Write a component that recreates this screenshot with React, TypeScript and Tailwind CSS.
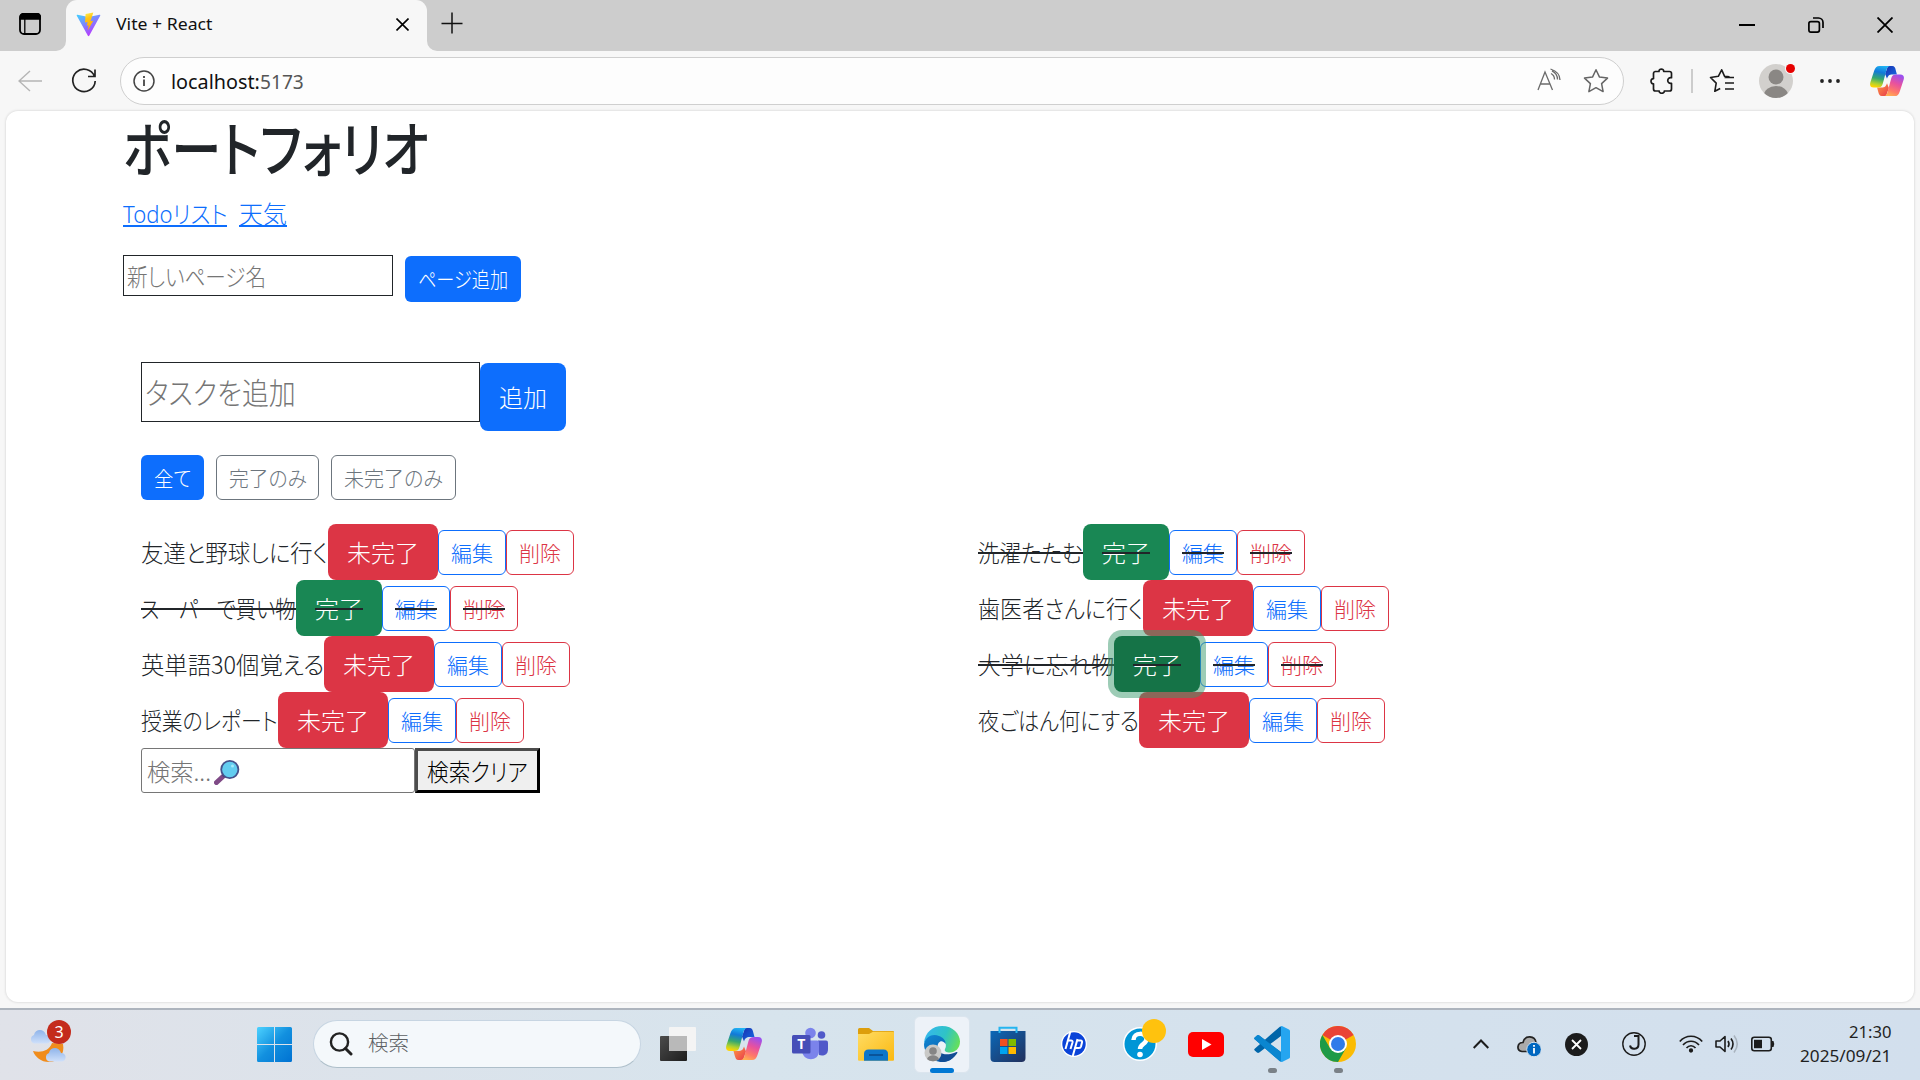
import React, { useLayoutEffect, useRef, useState } from 'react';

const FONT = 'font-["Noto_Sans","Noto_Sans_CJK_JP",sans-serif]';
const JP = 'font-light font-["Noto_Sans_CJK_JP",sans-serif] [font-feature-settings:"palt"]';

/** Single line of text condensed or widened to an exact advance width. */
function Fit({ w, className = '', children }: { w: number; className?: string; children: React.ReactNode }) {
  const ref = useRef<HTMLSpanElement>(null);
  const [k, setK] = useState(1);
  useLayoutEffect(() => {
    const measure = () => {
      if (ref.current && ref.current.offsetWidth) setK(w / ref.current.offsetWidth);
    };
    measure();
    document.fonts?.ready.then(measure);
  }, [w]);
  return (
    <span className="block shrink-0" style={{ width: w }}>
      <span ref={ref} className={`block w-max origin-left whitespace-nowrap ${className}`} style={{ transform: `scaleX(${k})` }}>
        {children}
      </span>
    </span>
  );
}

function Strike() {
  return <span className="absolute inset-x-0 top-1/2 h-[2px] bg-[#212529]" />;
}

function CopilotIcon({ size, id }: { size: number; id: string }) {
  return (
    <svg width={size} height={size} viewBox="0 0 36 36">
      <defs>
        <linearGradient id={`${id}a`} x1="0.6" y1="0" x2="0.4" y2="1">
          <stop offset="0" stopColor="#20b4f4" /><stop offset=".3" stopColor="#1279d8" />
          <stop offset=".6" stopColor="#35a86f" /><stop offset=".85" stopColor="#b4d22c" /><stop offset="1" stopColor="#ffd400" />
        </linearGradient>
        <linearGradient id={`${id}b`} x1="0.7" y1="0" x2="0.3" y2="1">
          <stop offset="0" stopColor="#9a50f0" /><stop offset=".4" stopColor="#e8519e" />
          <stop offset=".75" stopColor="#ff7a68" /><stop offset="1" stopColor="#ffb152" />
        </linearGradient>
        <linearGradient id={`${id}c`} x1="0" y1="0" x2="1" y2="1">
          <stop offset="0" stopColor="#1a2fae" /><stop offset="1" stopColor="#1470e8" />
        </linearGradient>
        <linearGradient id={`${id}d`} x1="0" y1="0" x2="1" y2="1">
          <stop offset="0" stopColor="#ff9a45" /><stop offset="1" stopColor="#e8394c" />
        </linearGradient>
      </defs>
      <path d="M19 2h4.500C26 2 26.800 4 27.300 6.500L28.500 11H24c-4 0-5 1.500-6 4.500l-2-5Z" fill={`url(#${id}c)`} />
      <path d="M17 34h-4.500C10 34 9.500 32 8.700 29.500L7.500 25H12c4 0 5-1.500 6-4.500l2 5Z" fill={`url(#${id}d)`} />
      <path d="M10 2h12c-3.500 0-4.200 2.500-5 6l-3.500 13c-.8 3-2.300 4-5.500 4H4C0 25-.5 22 .5 19l4-12C5.500 4 7 2 10 2Z" fill={`url(#${id}a)`} />
      <path d="M26 34H14c3.500 0 4.200-2.500 5-6l3.500-13c.8-3 2.300-4 5.500-4h4c4 0 4.500 3 3.500 6l-4 12c-1 3-2.500 5-5.500 5Z" fill={`url(#${id}b)`} />
    </svg>
  );
}

function TabBar() {
  return (
    <div className="flex h-[51px] bg-[#cdcdcd]">
      <div className="flex w-[66px] items-center pl-[19px]">
        <svg width="22" height="22" viewBox="0 0 22 22" className="mt-[-3px]">
          <rect x="1" y="1" width="20" height="20" rx="4" fill="none" stroke="#000" strokeWidth="1.8" />
          <path d="M1 6V4a3.500 3.500 0 0 1 3.500-3.500h13A3.500 3.500 0 0 1 21.500 4v2ZM5.800 5v16" stroke="#000" strokeWidth="1.300" />
        </svg>
      </div>
      <div className="relative flex w-[361px] items-center rounded-t-[11px] bg-[#f7f7f7]">
        <svg className="absolute -left-[10px] bottom-0" width="10" height="10"><path d="M10 0v10H0A10 10 0 0 0 10 0Z" fill="#f7f7f7" /></svg>
        <svg className="absolute -right-[10px] bottom-0" width="10" height="10"><path d="M0 0v10h10A10 10 0 0 1 0 0Z" fill="#f7f7f7" /></svg>
        <svg width="25" height="25" viewBox="0 0 25 25" className="ml-[10px] mt-[-3px]">
          <defs>
            <linearGradient id="v1" x1="0" y1="0" x2=".6" y2="1"><stop offset="0" stopColor="#41d1ff" /><stop offset="1" stopColor="#bd34fe" /></linearGradient>
            <linearGradient id="v2" x1=".4" y1="0" x2=".6" y2="1"><stop offset="0" stopColor="#ffea4a" /><stop offset=".3" stopColor="#ffc414" /><stop offset="1" stopColor="#ffa800" /></linearGradient>
          </defs>
          <path d="M1.500 2.800 12.500 5l11-2.200c.6-.1 1 .4.7 1L13.200 23.800c-.3.500-1 .500-1.300 0L.8 3.800c-.3-.6.1-1.100.7-1Z" fill="url(#v1)" />
          <path d="m17.300.5-7.700 1.400-.6 8.600 2.600-.5-.8 3.800 1.900-.5-1 5.300 5.600-9.900-2.800.5 2.800-8.700Z" fill="url(#v2)" />
        </svg>
        <div className={`ml-[15px] mt-[-3px] text-[16px] leading-6 text-[#111] ${FONT}`}><Fit w={96}>Vite + React</Fit></div>
        <svg width="13" height="13" viewBox="0 0 13 13" className="ml-auto mr-[18px] mt-[-2px]"><path d="m.5.5 12 12m0-12-12 12" stroke="#000" strokeWidth="1.600" /></svg>
      </div>
      <svg width="22" height="22" viewBox="0 0 22 22" className="ml-[14px] mt-[12px]"><path d="M11 .5v21M.5 11.500h21" stroke="#111" strokeWidth="1.500" /></svg>
      <div className="ml-auto mr-[27px] flex items-center gap-[53px] pb-[1px]">
        <svg width="16" height="16"><path d="M0 8h16" stroke="#000" strokeWidth="2" /></svg>
        <svg width="16" height="16" viewBox="0 0 16 16" fill="none" stroke="#000" strokeWidth="1.700">
          <rect x=".9" y="4.600" width="10.500" height="10.500" rx="2" /><path d="M5 1h5.500A4.500 4.500 0 0 1 15 5.500V11" />
        </svg>
        <svg width="16" height="16"><path d="m.5.5 15 15m0-15-15 15" stroke="#000" strokeWidth="1.800" /></svg>
      </div>
    </div>
  );
}

function Toolbar() {
  return (
    <div className="flex h-[60px] items-center bg-[#f7f7f7]">
      <svg width="24" height="22" viewBox="0 0 24 22" className="ml-[18px] mt-[-1px]" fill="none" stroke="#b5b5b5" strokeWidth="1.400"><path d="M24 11H1M12 1 1 11l11 10" /></svg>
      <svg width="26" height="26" viewBox="0 0 26 26" className="ml-[29px]" fill="none" stroke="#222" strokeWidth="1.700"><path d="M23.500 8.500A11.200 11.200 0 1 0 24.200 13M24 1.500v7h-7" /></svg>
      <div className="ml-[23px] flex h-[48px] w-[1504px] items-center rounded-full border border-[#cfcfcf] bg-[#fdfdfd]">
        <svg width="22" height="22" viewBox="0 0 22 22" className="ml-[12px]"><circle cx="11" cy="11" r="10" fill="none" stroke="#444" strokeWidth="1.500" /><path d="M11 9.500V16M11 6v2" stroke="#444" strokeWidth="1.800" /></svg>
        <div className={`ml-[16px] mt-[1px] flex text-[20px] leading-6 text-[#111] ${FONT}`}><Fit w={89}>localhost:</Fit><Fit w={44} className="text-[#555]">5173</Fit></div>
        <svg width="24" height="24" viewBox="0 0 24 24" className="ml-auto mt-[-3px]" fill="none" stroke="#6b6b6b" strokeWidth="1.500">
          <path d="m1 22 7-18 7.500 18M3.500 16h10M14 5.500c2 1 3.500 3 3.500 6M15 2.800c4 2 5.500 4.500 5.500 8.700M13.500 1c6 2 9.500 6 9.500 11" strokeWidth="1.300" />
        </svg>
        <svg width="26" height="26" viewBox="0 0 26 26" className="ml-[22px] mr-[14px]" fill="none" stroke="#666" strokeWidth="1.500" strokeLinejoin="round">
          <path d="m13 1.800 3.500 7.300 8 1-5.900 5.500 1.500 8-7.100-3.900-7.100 3.900 1.500-8L1.500 10.100l8-1Z" />
        </svg>
      </div>
      <svg width="24" height="26" viewBox="0 0 24 26" className="ml-[26px]" fill="none" stroke="#1b1b1b" strokeWidth="1.700" strokeLinejoin="round">
        <path d="M5 3.500h4c-.3-3.300 5-3.300 4.700 0h5.800a2 2 0 0 1 2 2v4.200c-5-1-5 6.600 0 5.600V21a2 2 0 0 1-2 2h-5.200c.2 3-5.300 3-5.100 0H5.500a2 2 0 0 1-2-2v-5.200c-3.300.3-3.300-5.400 0-5.100V5.500a2 2 0 0 1 2-2Z" />
      </svg>
      <div className="ml-[17px] h-[24px] w-[2px] bg-[#ccc]" />
      <svg width="26" height="26" viewBox="0 0 26 26" className="ml-[16px]" fill="none" stroke="#1b1b1b" strokeWidth="1.600" strokeLinejoin="round">
        <path d="m20.500 8.900-4.900-.6L12.700 1.800 9.300 8.300 1.500 9.500l5.700 5.600-1.400 8.200 5.400-2.800M15.500 9.500H25M16 15h9M16 21h9" />
      </svg>
      <div className="relative ml-[24px] size-[34px] shrink-0">
        <svg width="34" height="34" viewBox="0 0 34 34"><defs><clipPath id="avc"><circle cx="17" cy="17" r="17" /></clipPath></defs><circle cx="17" cy="17" r="17" fill="#d2d0cd" /><circle cx="17" cy="13" r="7.500" fill="#8a8784" /><ellipse cx="17" cy="31" rx="12" ry="9" fill="#8a8784" clipPath="url(#avc)" /></svg>
        <span className="absolute -right-[2px] top-0 size-[9px] rounded-full bg-[#e60000] ring-1 ring-[#f7f7f7]" />
      </div>
      <svg width="20" height="6" className="ml-[27px]"><circle cx="2" cy="3" r="1.900" fill="#222" /><circle cx="10" cy="3" r="1.900" fill="#222" /><circle cx="18" cy="3" r="1.900" fill="#222" /></svg>
      <div className="ml-[30px]"><CopilotIcon size={34} id="ct" /></div>
    </div>
  );
}

type Todo = { text: string; w: number; done: boolean; focus?: boolean };
const left: Todo[] = [
  { text: '友達と野球しに行く', w: 187, done: false },
  { text: 'スーパーで買い物', w: 155, done: true },
  { text: '英単語30個覚える', w: 183, done: false },
  { text: '授業のレポート', w: 137, done: false },
];
const right: Todo[] = [
  { text: '洗濯たたむ', w: 105, done: true },
  { text: '歯医者さんに行く', w: 165, done: false },
  { text: '大学に忘れ物', w: 136, done: true, focus: true },
  { text: '夜ごはん何にする', w: 161, done: false },
];

function Row({ t }: { t: Todo }) {
  const state = t.done
    ? t.focus
      ? 'z-10 bg-[#157347] shadow-[0_0_0_6px_rgba(60,153,110,0.5)]'
      : 'bg-[#198754]'
    : 'bg-[#dc3545]';
  return (
    <div className={`flex h-[56px] items-center text-[24px] leading-9 text-[#212529] ${JP}`}>
      <div className="relative"><Fit w={t.w}>{t.text}</Fit>{t.done && <Strike />}</div>
      <div className={`relative flex h-[56px] items-center rounded-[8px] px-[19px] text-white ${state}`}>
        <div className="relative"><Fit w={t.done ? 48 : 72}>{t.done ? '完了' : '未完了'}</Fit>{t.done && <Strike />}</div>
      </div>
      <div className="flex h-[45px] w-[68px] items-center justify-center rounded-[6px] border border-[#0d6efd] text-[21px] text-[#0d6efd]">
        <div className="relative"><Fit w={42}>編集</Fit>{t.done && <Strike />}</div>
      </div>
      <div className="flex h-[45px] w-[68px] items-center justify-center rounded-[6px] border border-[#dc3545] text-[21px] text-[#dc3545]">
        <div className="relative"><Fit w={42}>削除</Fit>{t.done && <Strike />}</div>
      </div>
    </div>
  );
}

function Page() {
  return (
    <div className={`mx-[6px] h-[891px] rounded-[12px] bg-white shadow-[0_0_2px_1px_#e2e2e2] ${JP}`}>
      <div className="ml-[117px] flex flex-col pt-px">
        <h1 className="h-[76px] text-[60px] font-medium leading-[68px] text-[#212529]"><Fit w={306}>ポートフォリオ</Fit></h1>
        <div className="mt-[8px] flex h-[40px] gap-[12px] text-[24px] leading-[34px] text-[#0d6efd]">
          <div className="h-[31px] border-b-2 border-[#0d6efd]"><Fit w={104}><span className={FONT}>Todo</span>リスト</Fit></div>
          <div className="h-[31px] border-b-2 border-[#0d6efd]"><Fit w={48}>天気</Fit></div>
        </div>
        <div className="mt-[19px] flex">
          <div className="flex h-[41px] w-[270px] items-center border border-[#212529] pl-[3px] text-[24px] leading-9 text-[#757575]"><Fit w={139}>新しいページ名</Fit></div>
          <div className="ml-[12px] mt-[1px] flex h-[46px] w-[116px] items-center justify-center rounded-[6px] bg-[#0d6efd] pb-[2px] text-[21px] leading-8 text-white"><Fit w={90}>ページ追加</Fit></div>
        </div>
        <div className="ml-[18px] mt-[60px] flex">
          <div className="flex h-[60px] w-[339px] items-center border border-[#212529] pb-[2px] pl-[3px] text-[30px] leading-10 text-[#757575]"><Fit w={151}>タスクを追加</Fit></div>
          <div className="mt-px flex h-[68px] w-[86px] items-center justify-center rounded-[8px] bg-[#0d6efd] text-[24px] leading-9 text-white"><Fit w={48}>追加</Fit></div>
        </div>
        <div className="ml-[18px] mt-[24px] flex h-[45px] gap-[12px] text-[21px] leading-8">
          <div className="flex w-[63px] items-center justify-center rounded-[6px] bg-[#0d6efd] pb-[2px] text-white"><Fit w={37}>全て</Fit></div>
          <div className="flex w-[103px] items-center justify-center rounded-[6px] border border-[#6c757d] pb-[2px] text-[#6c757d]"><Fit w={78}>完了のみ</Fit></div>
          <div className="flex w-[125px] items-center justify-center rounded-[6px] border border-[#6c757d] pb-[2px] text-[#6c757d]"><Fit w={99}>未完了のみ</Fit></div>
        </div>
        <div className="ml-[18px] mt-[24px] flex">
          <div className="w-[837px]">{left.map((t) => <Row key={t.text} t={t} />)}</div>
          <div>{right.map((t) => <Row key={t.text} t={t} />)}</div>
        </div>
        <div className="ml-[18px] flex h-[45px] text-[24px] leading-9">
          <div className="flex w-[274px] items-center rounded-[3px] border border-[#767676] pl-[5px] text-[#757575]">
            <Fit w={64}>検索...</Fit>
            <svg width="26" height="26" viewBox="0 0 26 26" className="ml-[3px] mt-[2px]">
              <path d="m2.500 23.500 7-6.500" stroke="#7f4a86" strokeWidth="5" strokeLinecap="round" />
              <path d="m9 17.500 3-3" stroke="#4a3a6b" strokeWidth="3" />
              <circle cx="15.800" cy="10.500" r="8.600" fill="#63cdf0" stroke="#45528c" strokeWidth="1.800" />
              <circle cx="18.500" cy="7" r="1.500" fill="#a4e9fb" />
            </svg>
          </div>
          <div className="flex w-[125px] items-center justify-center border-[3px] border-b-black border-l-[#4c4c4c] border-r-black border-t-[#4c4c4c] bg-[#efefef] text-black"><Fit w={101}>検索クリア</Fit></div>
        </div>
      </div>
    </div>
  );
}

function Slot({ children, bar = '' }: { children: React.ReactNode; bar?: string }) {
  return (
    <div className="relative flex h-[70px] w-[66px] items-center justify-center">
      {children}
      {bar === 'run' && <span className="absolute bottom-[6px] left-[29px] h-[5px] w-[9px] rounded-full bg-[#7a8187]" />}
      {bar === 'active' && <span className="absolute bottom-[6px] left-[21px] h-[5px] w-[24px] rounded-full bg-[#0078d4]" />}
    </div>
  );
}

function Taskbar() {
  return (
    <div className="flex h-[72px] items-center border-t-2 border-[#adb4bd] bg-linear-to-r from-[#e0e2e9] via-[#d7e4ed] to-[#d2dfed] from-0% via-40% pb-[2px]">
      <div className="relative ml-[29px] h-[44px] w-[42px]">
        <svg width="42" height="44" viewBox="0 0 42 44">
          <defs><linearGradient id="cl" x1="0" y1="0" x2="0" y2="1"><stop offset="0" stopColor="#8fb4ea" /><stop offset="1" stopColor="#cfe0fa" /></linearGradient></defs>
          <path d="M34 22c2 10-4 18-14 18-8 0-14-5-16-11 8 2 16 0 19-8Z" fill="#f08c1c" />
          <path d="M5 21.500a4.500 4.500 0 0 1 0-8.500c1-6 10-7 12 0 5 0 6 8 1 8.500Z" fill="url(#cl)" />
          <path d="M20 39.500a4.500 4.500 0 0 1 0-8.500c1-6 10-7 12 0 6 0 6 8 1 8.500Z" fill="url(#cl)" />
        </svg>
        <span className={`absolute -top-[2px] left-[18px] flex size-[24px] items-center justify-center rounded-full bg-[#c42b1c] text-[16px] leading-none text-white ${FONT}`}>3</span>
      </div>
      <svg width="35" height="35" viewBox="0 0 35 35" className="ml-[186px]">
        <defs><linearGradient id="wi" gradientUnits="userSpaceOnUse" x1="0" y1="0" x2="35" y2="35"><stop offset="0" stopColor="#4dd2ff" /><stop offset=".5" stopColor="#1290df" /><stop offset="1" stopColor="#0072d2" /></linearGradient></defs>
        <path d="M1.500 0H17v17H0V1.500Q0 0 1.500 0ZM18 0h15.500Q35 0 35 1.500V17H18ZM0 18h17v17H1.500Q0 35 0 33.500ZM18 18h17v15.500q0 1.500-1.500 1.500H18Z" fill="url(#wi)" />
      </svg>
      <div className="ml-[21px] flex h-[48px] w-[328px] items-center rounded-full border border-[#c7d5e2] border-b-[#aebfca] bg-[#f4f8fb]">
        <svg width="24" height="24" viewBox="0 0 24 24" className="ml-[15px]" fill="none" stroke="#222" strokeWidth="2.400" strokeLinecap="round"><circle cx="10.500" cy="10" r="8.600" /><path d="m16.500 16.500 5.500 5.500" strokeWidth="3" /></svg>
        <div className={`ml-[15px] pb-[2px] text-[20px] leading-7 text-[#5c6063] ${JP}`}><Fit w={41}>検索</Fit></div>
      </div>
      <div className="ml-[4px] flex">
        <Slot>
          <svg width="36" height="36" viewBox="0 0 36 36">
            <defs><linearGradient id="tv" x1="0" y1="0" x2="1" y2="1"><stop offset="0" stopColor="#4c4c4c" /><stop offset="1" stopColor="#1d1d1d" /></linearGradient></defs>
            <rect y="10" width="27" height="25" rx="1" fill="url(#tv)" /><rect x="9" y="1" width="27" height="24" rx="1" fill="#f4f4f4" /><path d="M9 10h18v15H10q-1 0-1-1Z" fill="#b9b9b9" />
          </svg>
        </Slot>
        <Slot><CopilotIcon size={36} id="cb" /></Slot>
        <Slot>
          <svg width="36" height="36" viewBox="0 0 36 36">
            <circle cx="29.500" cy="9" r="3.800" fill="#5059c9" /><path d="M26 14.500h8q2 0 2 2V23c0 7-6 7-9 6Z" fill="#5059c9" />
            <circle cx="18.500" cy="7" r="5.300" fill="#7b83eb" /><path d="M10 14.500h15q2 0 2 2V25c0 11-16 11-17 0Z" fill="#7b83eb" />
            <rect y="9" width="18.500" height="18.500" rx="1.500" fill="#464eb8" />
            <text x="9.200" y="23" textAnchor="middle" fontSize="14" fontWeight="700" fill="#fff" fontFamily="Open Sans">T</text>
          </svg>
        </Slot>
        <Slot>
          <svg width="36" height="36" viewBox="0 0 36 36">
            <defs><linearGradient id="fo" x1="0" y1="0" x2="1" y2="1"><stop offset="0" stopColor="#ffdc64" /><stop offset="1" stopColor="#fbb911" /></linearGradient></defs>
            <path d="M0 9V3.500Q0 2 1.500 2H11L15 5h20q1 0 1 1v6H0Z" fill="#dd9e0c" /><path d="M0 8h11l4-2.300h20q1 0 1 1v27q0 1-1 1H1q-1 0-1-1Z" fill="url(#fo)" />
            <path d="M6 34.700V28q0-4.500 4.500-4.500h15Q30 23.500 30 28v6.700Z" fill="#0e76c9" /><path d="M11 29h14" stroke="#0a4a8a" strokeWidth="1.500" />
          </svg>
        </Slot>
        <Slot bar="active">
          <div className="flex h-[57px] w-[56px] items-center justify-center rounded-[6px] border border-[#dbe5ee] bg-[#edf2f8]">
            <svg width="36" height="36" viewBox="0 0 36 36">
              <defs>
                <linearGradient id="e1" x1="0" y1=".3" x2="1" y2=".6"><stop offset="0" stopColor="#35b7ee" /><stop offset=".55" stopColor="#2fc3c6" /><stop offset="1" stopColor="#66e05a" /></linearGradient>
                <linearGradient id="e2" x1="0" y1="0" x2=".7" y2="1"><stop offset="0" stopColor="#1088d4" /><stop offset="1" stopColor="#0b59a8" /></linearGradient>
              </defs>
              <path d="M0 17C1 6 9 0 18 0c11 0 18 8 18 15.500 0 7-5 11-10 11-4 0-6-1.500-5-3.500 2-3 1-9-5-11C9 10 3 12 0 17Z" fill="url(#e1)" />
              <path d="M0 18C2 10 9 7.500 15 10c4 1.500 7 4.500 6.500 8-3-5-8-3-8 3 0 8 8 12 17 9-5 7-15 8-22 3C3 29 0 24 0 18Z" fill="url(#e2)" />
              <path d="M13.500 21c0 8 10 9 19 5 .8-.3 1.300.3.8 1C29 34 22 37 16 35.500 10 31 9 24 13.500 21Z" fill="#124d94" />
              <circle cx="9" cy="27" r="8.500" fill="#c9c9c7" /><circle cx="9" cy="25" r="3.800" fill="#858585" /><path d="M3 33c2-5 10-5 12 0-3 3-9 3-12 0Z" fill="#858585" />
            </svg>
          </div>
        </Slot>
        <Slot>
          <svg width="36" height="36" viewBox="0 0 36 36">
            <defs><linearGradient id="st" x1="0" y1="0" x2="1" y2="1"><stop offset="0" stopColor="#0b68b8" /><stop offset="1" stopColor="#22305c" /></linearGradient></defs>
            <path d="M9.500 8V1.800h17V8" fill="none" stroke="#25b5f0" strokeWidth="2" /><path d="M.5 5h35v27q0 4-4 4h-27q-4 0-4-4Z" fill="url(#st)" />
            <path d="M9.500 7V5M26.500 7V5" stroke="#25b5f0" strokeWidth="2" />
            <path d="M10 13h7.500v7H10Z" fill="#f25022" /><path d="M18.500 13H26v7h-7.500Z" fill="#7fba00" /><path d="M10 21h7.500v7H10Z" fill="#00a4ef" /><path d="M18.500 21H26v7h-7.500Z" fill="#ffb900" />
          </svg>
        </Slot>
        <Slot>
          <svg width="26" height="26" viewBox="0 0 26 26"><circle cx="13" cy="13" r="13" fill="#fff" /><circle cx="13" cy="13" r="11.700" fill="#0a43d8" /><g fill="none" stroke="#fff" strokeWidth="2"><path d="M9.500 0 4.500 18M7 9.500h3q2 0 1.500 2L9.500 18M16.500 8 11.500 26M16 9.500h3.500q2 0 1.500 2l-1 4q-.5 1.500-2 1.500H14" /></g></svg>
        </Slot>
        <Slot>
          <div className="relative size-[34px]">
            <svg width="34" height="34" viewBox="0 0 34 34"><circle cx="17" cy="17" r="17" fill="#fff" /><circle cx="17" cy="17" r="15.500" fill="#0096d6" /><path d="M10.500 13c0-8 13-8 13-1 0 5-6.500 5-6.500 10" fill="none" stroke="#fff" strokeWidth="4.500" /><circle cx="17" cy="27.500" r="2.800" fill="#fff" /></svg>
            <span className="absolute -right-[9px] -top-[8px] size-[24px] rounded-full bg-[#ffc20e]" />
          </div>
        </Slot>
        <Slot><svg width="36" height="25" viewBox="0 0 36 25"><rect width="36" height="25" rx="5" fill="#f00" /><path d="m14 7 9.500 5.500L14 18Z" fill="#fff" /></svg></Slot>
        <Slot bar="run">
          <svg width="36" height="36" viewBox="0 0 36 36">
            <path d="M.7 11.500 3 9.500q1-.8 2.300 0L27 26v9.500q-1.200-.2-2-1L.7 13.300q-1-.9 0-1.800Z" fill="#0a7cc4" /><path d="M.7 24.500 3 26.500q1 .8 2.300 0L27 10V.5q-1.200.2-2 1L.7 22.700q-1 .9 0 1.800Z" fill="#0065a9" />
            <path d="M.7 11.500 3 9.500q1-.8 2.300 0L27 26v9.500q-1.200-.2-2-1L.7 13.300q-1-.9 0-1.800Z" fill="#0a86d0" />
            <path d="M27 .3q.7-.4 1.500 0L35 3.500q1 .5 1 1.500v26q0 1-1 1.500l-6.500 3.200q-.8.400-1.500 0Z" fill="#25a5f0" />
          </svg>
        </Slot>
        <Slot bar="run">
          <svg width="36" height="36" viewBox="0 0 36 36">
            <circle cx="18" cy="18" r="18" fill="#fbbc04" /><path d="M18 18 2.400 9A18 18 0 0 1 33.600 9Z" fill="#ea4335" /><path d="m10.200 22.500-7.800-13.500A18 18 0 0 0 18 36l7.800-13.500Z" fill="#1e9a47" />
            <circle cx="18" cy="18" r="9" fill="#fff" /><circle cx="18" cy="18" r="7" fill="#2f7bea" />
          </svg>
        </Slot>
      </div>
      <div className="ml-auto mr-[28px] flex items-center">
        <svg width="16" height="10" viewBox="0 0 16 10" fill="none" stroke="#1c1c1c" strokeWidth="2"><path d="m.7 9 7.300-7.500L15.300 9" /></svg>
        <svg width="24" height="22" viewBox="0 0 24 22" className="ml-[28px] mt-[3px]"><path d="M5 16.500c-6-1-5-9 1-9 2-8 12-7 13 0l3 4-12 5Z" fill="#aaa" stroke="#222" strokeWidth="1.700" /><circle cx="17" cy="14.500" r="7.300" fill="#0067c0" stroke="#d4e1ec" strokeWidth="1" /><path d="M17 13v5.500M17 10v1.800" stroke="#fff" strokeWidth="1.800" /></svg>
        <svg width="23" height="23" viewBox="0 0 23 23" className="ml-[24px]"><circle cx="11.500" cy="11.500" r="11.500" fill="#1c1c1c" /><path d="m7 7 9 9m0-9-9 9" stroke="#fff" strokeWidth="1.800" /></svg>
        <svg width="24" height="24" viewBox="0 0 24 24" className="ml-[34px]" fill="none" stroke="#1c1c1c"><circle cx="12" cy="12" r="11.200" strokeWidth="1.400" /><path d="M12 4h4.500V12.500c0 5-7.500 6-8.500 1" strokeWidth="2" /></svg>
        <svg width="24" height="18" viewBox="0 0 24 18" className="ml-[33px]" fill="none" stroke="#1c1c1c" strokeWidth="1.700"><path d="M.8 6.500c6-7 16.400-7 22.400 0M4 10c4.500-5 11.500-5 16 0M7.500 13c2.500-3 6.500-3 9 0" /><circle cx="12" cy="15.500" r="1.300" fill="#1c1c1c" /></svg>
        <svg width="24" height="20" viewBox="0 0 24 20" className="ml-[12px]" fill="none" stroke="#1c1c1c" strokeWidth="1.600"><path d="M1 7h4l5-4.500v15L5 13H1Z" strokeLinejoin="round" /><path d="M13 7q2 3 0 6M16 4.500q4 5.500 0 11" /><path d="M19 1.500q6.500 8.500 0 17" stroke="#aab4bf" /></svg>
        <svg width="24" height="16" viewBox="0 0 24 16" className="ml-[12px]"><rect x=".8" y="1.300" width="19.500" height="13.400" rx="2.500" fill="none" stroke="#1c1c1c" strokeWidth="1.600" /><rect x="3" y="3.800" width="8" height="8.400" fill="#1c1c1c" /><path d="M21 5h1.500Q24 8 22.500 11H21Z" fill="#1c1c1c" /></svg>
        <div className={`ml-[25px] mr-[1px] flex flex-col items-end text-[17px] leading-6 text-[#1f1f1f] ${FONT}`}>
          <Fit w={42}>21:30</Fit>
          <Fit w={91}>2025/09/21</Fit>
        </div>
      </div>
    </div>
  );
}

export default function App() {
  return (
    <div className="h-[1080px] w-[1920px] overflow-hidden bg-[#f7f7f7]">
      <TabBar />
      <Toolbar />
      <Page />
      <div className="h-[6px]" />
      <Taskbar />
    </div>
  );
}
